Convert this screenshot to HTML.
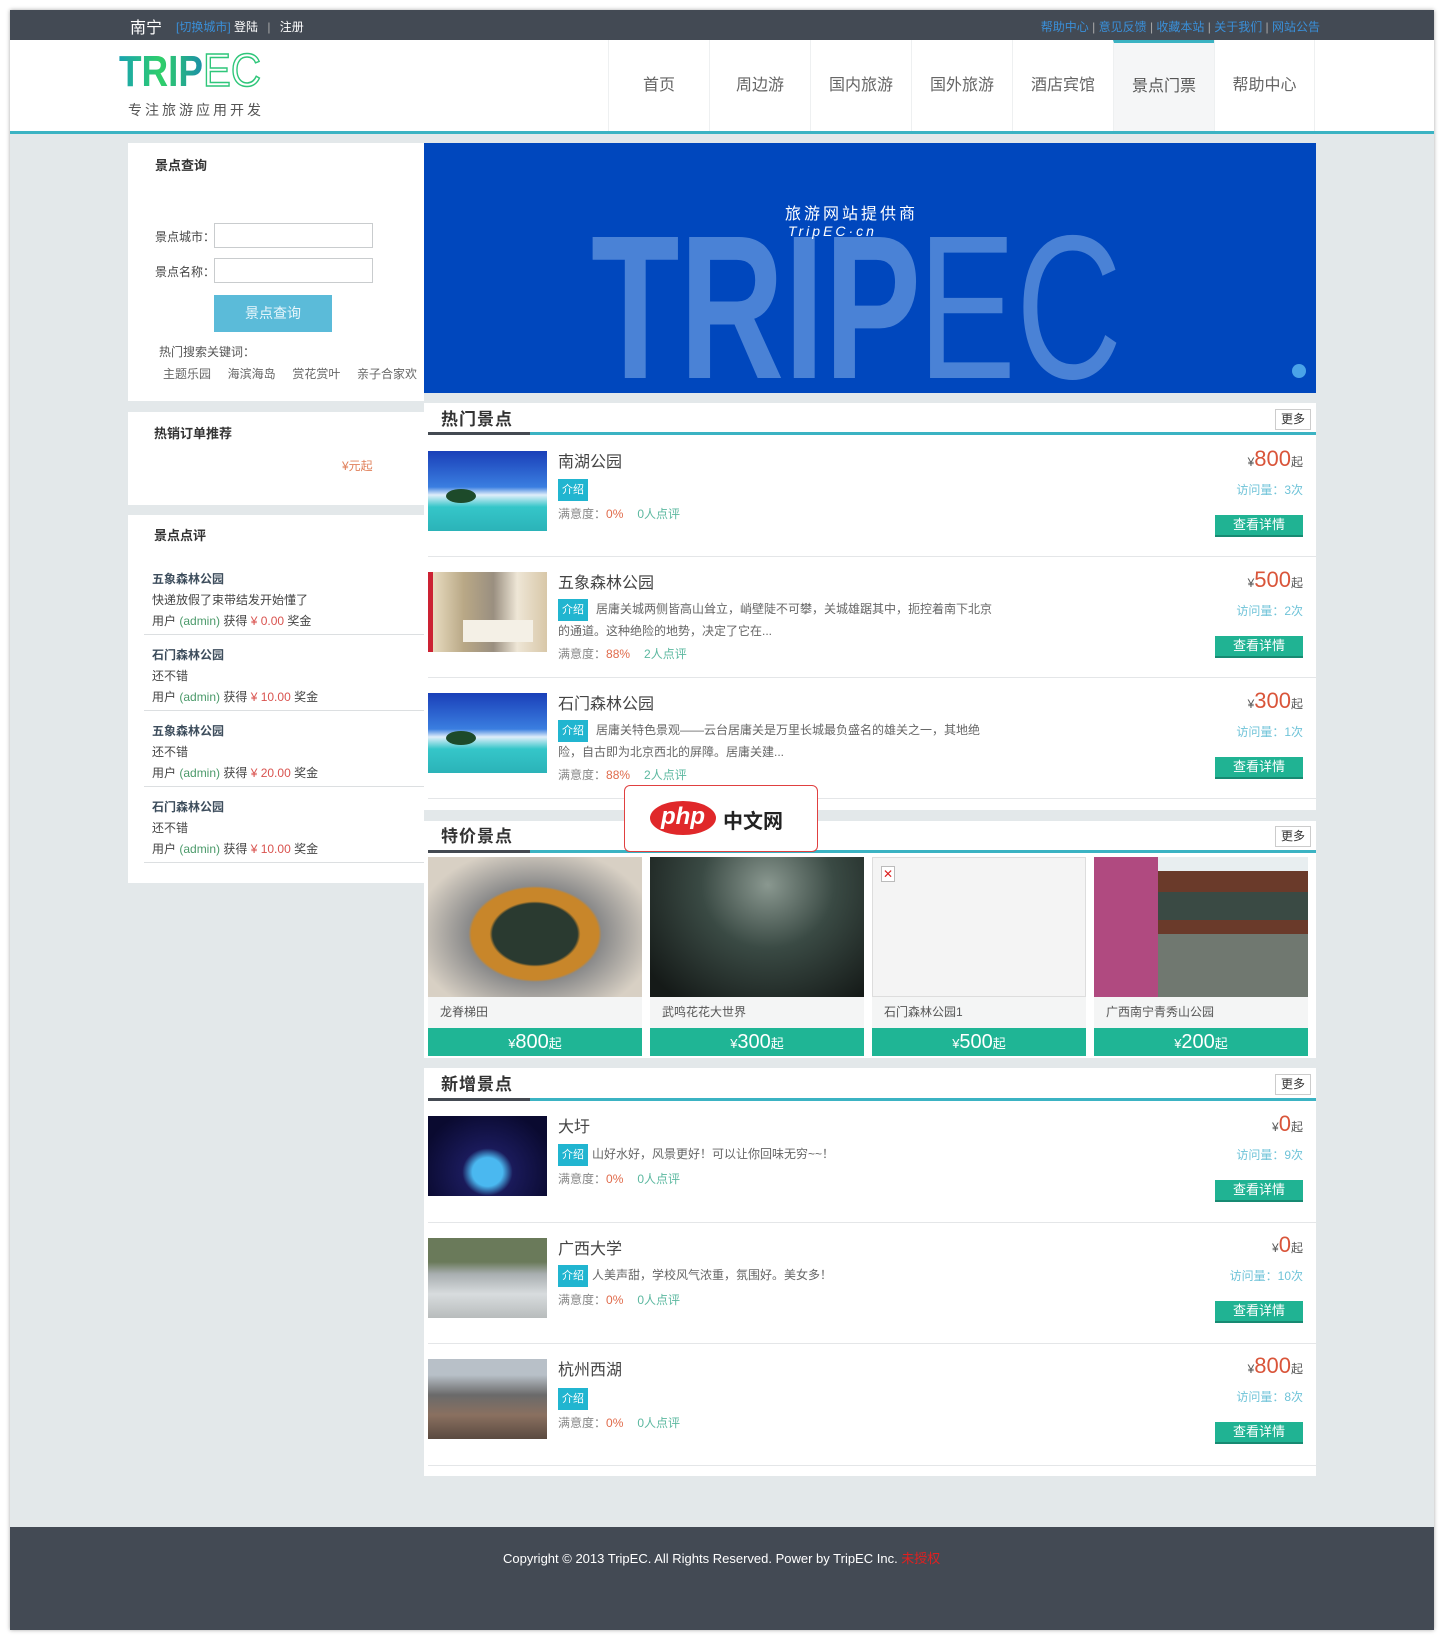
<!DOCTYPE html>
<html><head><meta charset="utf-8">
<style>
*{margin:0;padding:0;box-sizing:border-box}
body{width:1442px;height:1636px;background:#fff;position:relative;overflow:hidden;font-family:"Liberation Sans","Noto Sans CJK SC",sans-serif;font-size:12px;color:#666}
.a{position:absolute}
#page{position:absolute;left:10px;top:10px;width:1424px;height:1620px;background:#e3e8ea;box-shadow:0 0 4px rgba(0,0,0,.35)}
.wp{background:#fff}
.nav{position:absolute;top:40px;height:91px;width:101px;border-left:1px solid #eef0f1;text-align:center;line-height:91px;font-size:16px;color:#666}
.t13{font-size:13px;color:#333;font-weight:bold}
.inp{position:absolute;left:214px;width:159px;height:25px;border:1px solid #c9ccce;background:#fff}
.hd{position:absolute;left:428px;width:888px;height:3px;background:#3bb3c3}
.hd:before{content:"";position:absolute;left:0;top:0;width:102px;height:3px;background:#444a52}
.ttl{position:absolute;left:441px;font-size:17px;font-weight:bold;color:#333;letter-spacing:1px}
.more{position:absolute;left:1275px;width:36px;height:21px;border:1px solid #ccc;font-size:12px;color:#333;text-align:center;line-height:19px;background:#fff}
.img{position:absolute;left:428px;width:119px;height:80px}
.nm{position:absolute;left:558px;font-size:16px;color:#444}
.bd{display:inline-block;width:30px;height:22px;background:#21b5d0;color:#fff;font-size:11px;text-align:center;line-height:22px;vertical-align:middle;margin-right:8px}
.ds{position:absolute;left:558px;width:440px;font-size:12px;color:#666;line-height:20px}
.st{position:absolute;left:558px;font-size:12px;color:#888}
.st .r{color:#e06b4b}.st .g{color:#5cb8a0;margin-left:14px}
.pr{position:absolute;right:139px;text-align:right;color:#555;font-size:12px}
.pr b{font-size:22px;font-weight:normal;color:#d9553a}
.vis{position:absolute;right:139px;color:#6fc3d8;font-size:12px}
.btn{position:absolute;left:1215px;width:88px;height:22px;background:#20b393;border-bottom:2px solid #178a72;color:#fff;font-size:13px;text-align:center;line-height:20px}
.sep{position:absolute;left:428px;width:888px;height:1px;background:#e4e6e8}
.card{position:absolute;top:857px;width:214px}
.card .p{height:140px}
.card .n{height:31px;background:#f4f5f5;line-height:31px;padding-left:12px;font-size:12px;color:#555}
.card .b{height:28px;background:#1fb595;color:#fff;text-align:center;line-height:28px;font-size:13px}
.card .b b{font-size:20px;font-weight:normal}
.rv{position:absolute;left:152px;font-size:12px;color:#444;line-height:21px}
.rv .h{font-weight:bold;color:#3d4d5c}
.rv .g{color:#4b9a6a}.rv .r{color:#d9534f}
.rs{position:absolute;left:144px;width:280px;height:1px;background:#dcdfe1}
</style></head><body>
<div id="page"></div>
<div class="a" style="left:10px;top:10px;width:1424px;height:30px;background:#434a54"></div>
<div class="a" style="left:130px;top:14px;font-size:16px;color:#fff">南宁</div>
<div class="a" style="left:176px;top:18px;font-size:12px;color:#fff"><span style="color:#3a8fd8">[切换城市]</span> 登陆 <span style="color:#aaa;margin:0 6px">|</span> 注册</div>
<div class="a" style="right:122px;top:18px;font-size:12px;color:#3a8fd8">帮助中心 <span style="color:#aaa">|</span> 意见反馈 <span style="color:#aaa">|</span> 收藏本站 <span style="color:#aaa">|</span> 关于我们 <span style="color:#aaa">|</span> 网站公告</div>
<div class="a wp" style="left:10px;top:40px;width:1424px;height:91px"></div>
<div class="a" style="left:10px;top:131px;width:1424px;height:3px;background:#3bb3c3"></div>
<svg class="a" style="left:115px;top:48px" width="160" height="50">
<defs><linearGradient id="lg" x1="0" x2="1"><stop offset="0" stop-color="#1aa3b0"/><stop offset=".5" stop-color="#2fcf6a"/><stop offset="1" stop-color="#1c8fa8"/></linearGradient></defs>
<text x="4" y="38" font-family="Liberation Sans" font-weight="bold" font-size="44" fill="url(#lg)" textLength="84" lengthAdjust="spacingAndGlyphs">TRIP</text>
<text x="88" y="38" font-family="Liberation Sans" font-size="46" fill="none" stroke="#2fc67a" stroke-width="1.5" textLength="58" lengthAdjust="spacingAndGlyphs">EC</text>
</svg>
<div class="a" style="left:128px;top:100px;font-size:14px;color:#555;letter-spacing:3px">专注旅游应用开发</div>
<div class="nav" style="left:608px">首页</div>
<div class="nav" style="left:709px">周边游</div>
<div class="nav" style="left:810px">国内旅游</div>
<div class="nav" style="left:911px">国外旅游</div>
<div class="nav" style="left:1012px">酒店宾馆</div>
<div class="nav" style="left:1113px;background:#f5f6f7;border-top:3px solid #3bb3c3;line-height:88px;top:40px;color:#555">景点门票</div>
<div class="nav" style="left:1214px;border-right:1px solid #eef0f1">帮助中心</div>

<div class="a wp" style="left:128px;top:143px;width:296px;height:258px"></div>
<div class="a t13" style="left:155px;top:155px">景点查询</div>
<div class="a" style="left:155px;top:228px;color:#444">景点城市：</div>
<div class="inp" style="top:223px"></div>
<div class="a" style="left:155px;top:263px;color:#444">景点名称：</div>
<div class="inp" style="top:258px"></div>
<div class="a" style="left:214px;top:295px;width:118px;height:37px;background:#5bbbd9;color:#e8f6fb;font-size:14px;text-align:center;line-height:37px">景点查询</div>
<div class="a" style="left:159px;top:343px;color:#555">热门搜索关键词：</div>
<div class="a" style="left:163px;top:365px;color:#666;white-space:nowrap;width:261px;overflow:hidden">主题乐园&nbsp;&nbsp;&nbsp;&nbsp;&nbsp;海滨海岛&nbsp;&nbsp;&nbsp;&nbsp;&nbsp;赏花赏叶&nbsp;&nbsp;&nbsp;&nbsp;&nbsp;亲子合家欢</div>

<div class="a wp" style="left:128px;top:412px;width:296px;height:93px"></div>
<div class="a t13" style="left:154px;top:423px">热销订单推荐</div>
<div class="a" style="left:342px;top:457px;color:#e0805a">¥元起</div>

<div class="a wp" style="left:128px;top:515px;width:296px;height:368px"></div>
<div class="a t13" style="left:154px;top:525px">景点点评</div>
<div class="rv" style="top:569px"><div class="h">五象森林公园</div><div>快递放假了束带结发开始懂了</div><div>用户 <span class="g">(admin)</span> 获得 <span class="r">¥ 0.00</span> 奖金</div></div>
<div class="rs" style="top:634px"></div>
<div class="rv" style="top:645px"><div class="h">石门森林公园</div><div>还不错</div><div>用户 <span class="g">(admin)</span> 获得 <span class="r">¥ 10.00</span> 奖金</div></div>
<div class="rs" style="top:710px"></div>
<div class="rv" style="top:721px"><div class="h">五象森林公园</div><div>还不错</div><div>用户 <span class="g">(admin)</span> 获得 <span class="r">¥ 20.00</span> 奖金</div></div>
<div class="rs" style="top:786px"></div>
<div class="rv" style="top:797px"><div class="h">石门森林公园</div><div>还不错</div><div>用户 <span class="g">(admin)</span> 获得 <span class="r">¥ 10.00</span> 奖金</div></div>
<div class="rs" style="top:862px"></div>

<div class="a" style="left:424px;top:143px;width:892px;height:250px;background:#0047bd;overflow:hidden">
<svg width="892" height="250">
<text x="167" y="235" font-family="Liberation Sans" font-weight="bold" font-size="205" fill="#4a82d6" textLength="330" lengthAdjust="spacingAndGlyphs">TRIP</text>
<text x="494" y="235" font-family="Liberation Sans" font-size="205" fill="#4a82d6" textLength="204" lengthAdjust="spacingAndGlyphs">EC</text>
<circle cx="875" cy="228" r="7" fill="#4aa3e8"/>
</svg>
<div class="a" style="left:361px;top:57px;color:#fff;font-size:16px;letter-spacing:3px;font-family:'Noto Sans CJK SC',sans-serif">旅游网站提供商</div>
<div class="a" style="left:364px;top:80px;color:#fff;font-size:14px;font-style:italic;letter-spacing:3px">TripEC·cn</div>
</div>

<div class="a wp" style="left:424px;top:403px;width:892px;height:407px"></div>
<div class="ttl" style="top:405px">热门景点</div>
<div class="more" style="top:409px">更多</div>
<div class="hd" style="top:432px"></div>

<div class="img" style="top:451px;background:linear-gradient(#1a3fb8 0%,#3a7ee0 45%,#dfeefa 55%,#35c6c9 70%,#2bb3b8 100%)"><div class="a" style="left:18px;top:38px;width:30px;height:14px;border-radius:50%;background:#1d4a2a"></div></div>
<div class="nm" style="top:448px">南湖公园</div>
<div class="a" style="left:558px;top:479px"><span class="bd">介绍</span></div>
<div class="st" style="top:505px">满意度：<span class="r">0%</span><span class="g">0人点评</span></div>
<div class="pr" style="top:446px">¥<b>800</b>起</div>
<div class="vis" style="top:481px">访问量：3次</div>
<div class="btn" style="top:515px">查看详情</div>
<div class="sep" style="top:556px"></div>

<div class="img" style="top:572px;background:linear-gradient(90deg,#c23 0 4%,#e8dcc0 4%,#b9a886 30%,#9a8f80 55%,#eee6d6 75%,#d8c7a8 100%)"><div class="a" style="left:35px;top:48px;width:70px;height:22px;background:#f4f0e6"></div></div>
<div class="nm" style="top:569px">五象森林公园</div>
<div class="ds" style="top:599px"><span class="bd">介绍</span>居庸关城两侧皆高山耸立，峭壁陡不可攀，关城雄踞其中，扼控着南下北京的通道。这种绝险的地势，决定了它在...</div>
<div class="st" style="top:645px">满意度：<span class="r">88%</span><span class="g">2人点评</span></div>
<div class="pr" style="top:567px">¥<b>500</b>起</div>
<div class="vis" style="top:602px">访问量：2次</div>
<div class="btn" style="top:636px">查看详情</div>
<div class="sep" style="top:677px"></div>

<div class="img" style="top:693px;background:linear-gradient(#1a3fb8 0%,#3a7ee0 45%,#dfeefa 55%,#35c6c9 70%,#2bb3b8 100%)"><div class="a" style="left:18px;top:38px;width:30px;height:14px;border-radius:50%;background:#1d4a2a"></div></div>
<div class="nm" style="top:690px">石门森林公园</div>
<div class="ds" style="top:720px"><span class="bd">介绍</span>居庸关特色景观——云台居庸关是万里长城最负盛名的雄关之一，其地绝险，自古即为北京西北的屏障。居庸关建...</div>
<div class="st" style="top:766px">满意度：<span class="r">88%</span><span class="g">2人点评</span></div>
<div class="pr" style="top:688px">¥<b>300</b>起</div>
<div class="vis" style="top:723px">访问量：1次</div>
<div class="btn" style="top:757px">查看详情</div>
<div class="sep" style="top:798px"></div>

<div class="a wp" style="left:424px;top:821px;width:892px;height:237px"></div>
<div class="ttl" style="top:822px">特价景点</div>
<div class="more" style="top:826px">更多</div>
<div class="hd" style="top:850px"></div>
<div class="card" style="left:428px"><div class="p" style="background:radial-gradient(ellipse at 50% 55%,#2a3a30 0 28%,#c8862a 30% 42%,#8a8a8a 44%,#d8d0c4 80%)"></div><div class="n">龙脊梯田</div><div class="b">¥<b>800</b>起</div></div>
<div class="card" style="left:650px"><div class="p" style="background:radial-gradient(ellipse at 55% 20%,#8a9890 0,#3a4a44 40%,#151a18 90%)"></div><div class="n">武鸣花花大世界</div><div class="b">¥<b>300</b>起</div></div>
<div class="card" style="left:872px"><div class="p" style="background:#f4f4f4;border:1px solid #ddd;position:relative"><div class="a" style="left:8px;top:8px;width:14px;height:16px;border:1px solid #bbb;color:#d22;font-size:12px;line-height:14px;text-align:center;background:#fff">✕</div></div><div class="n">石门森林公园1</div><div class="b">¥<b>500</b>起</div></div>
<div class="card" style="left:1094px"><div class="p" style="background:linear-gradient(90deg,#b04a80 0 30%,transparent 30%),linear-gradient(#e8eef0 0 10%,#6a3a2a 10% 25%,#3a4a44 25% 45%,#6a3a2a 45% 55%,#707870 55% 100%)"></div><div class="n">广西南宁青秀山公园</div><div class="b">¥<b>200</b>起</div></div>

<div class="a wp" style="left:424px;top:1068px;width:892px;height:408px"></div>
<div class="ttl" style="top:1070px">新增景点</div>
<div class="more" style="top:1074px">更多</div>
<div class="hd" style="top:1098px"></div>

<div class="img" style="top:1116px;background:radial-gradient(ellipse at 50% 70%,#4ab8f0 0 18%,#1a1a5a 30%,#0a0a30 80%)"></div>
<div class="nm" style="top:1113px">大圩</div>
<div class="ds" style="top:1144px;width:500px"><span class="bd" style="margin-right:4px">介绍</span>山好水好，风景更好！可以让你回味无穷~~！</div>
<div class="st" style="top:1170px">满意度：<span class="r">0%</span><span class="g">0人点评</span></div>
<div class="pr" style="top:1111px">¥<b>0</b>起</div>
<div class="vis" style="top:1146px">访问量：9次</div>
<div class="btn" style="top:1180px">查看详情</div>
<div class="sep" style="top:1222px"></div>

<div class="img" style="top:1238px;background:linear-gradient(#6a7a5a 0 30%,#a8aeb0 45%,#d8dcde 70%,#b8bcbc 100%)"></div>
<div class="nm" style="top:1235px">广西大学</div>
<div class="ds" style="top:1265px;width:500px"><span class="bd" style="margin-right:4px">介绍</span>人美声甜，学校风气浓重，氛围好。美女多！</div>
<div class="st" style="top:1291px">满意度：<span class="r">0%</span><span class="g">0人点评</span></div>
<div class="pr" style="top:1232px">¥<b>0</b>起</div>
<div class="vis" style="top:1267px">访问量：10次</div>
<div class="btn" style="top:1301px">查看详情</div>
<div class="sep" style="top:1343px"></div>

<div class="img" style="top:1359px;background:linear-gradient(#b8c0c8 0 20%,#6a6a6a 45%,#8a7060 70%,#5a4a40 100%)"></div>
<div class="nm" style="top:1356px">杭州西湖</div>
<div class="a" style="left:558px;top:1388px"><span class="bd">介绍</span></div>
<div class="st" style="top:1414px">满意度：<span class="r">0%</span><span class="g">0人点评</span></div>
<div class="pr" style="top:1353px">¥<b>800</b>起</div>
<div class="vis" style="top:1388px">访问量：8次</div>
<div class="btn" style="top:1422px">查看详情</div>
<div class="sep" style="top:1465px"></div>

<div class="a" style="left:10px;top:1527px;width:1424px;height:103px;background:#434a54"></div>
<div class="a" style="left:503px;top:1548px;color:#fff;font-size:13px">Copyright © 2013 TripEC. All Rights Reserved. Power by TripEC Inc. <span style="color:#e02020">未授权</span></div>

<div class="a" style="left:624px;top:785px;width:194px;height:67px;background:#fff;border:1px solid #e04040;border-radius:6px"></div>
<div class="a" style="left:650px;top:801px;width:66px;height:34px;border-radius:50%;background:#e0282a;color:#fff;font-size:24px;font-style:italic;font-weight:bold;text-align:center;line-height:32px">php</div>
<div class="a" style="left:723px;top:805px;font-size:20px;color:#222;font-weight:bold">中文网</div>
</body></html>
